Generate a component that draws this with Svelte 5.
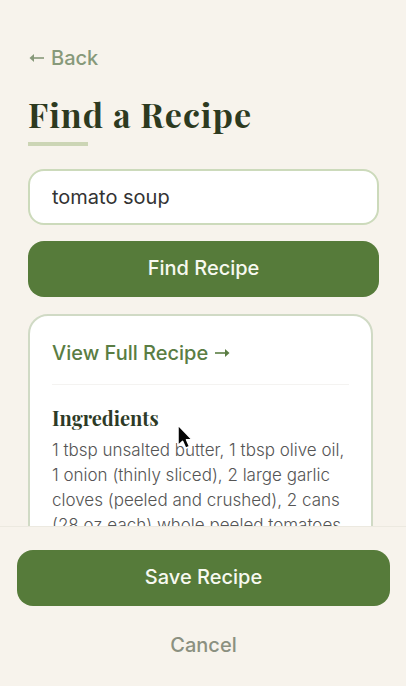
<script>
  let query = $state("tomato soup");

  const recipe = {
    url: "#recipe",
    ingredients: [
      "1 tbsp unsalted butter",
      "1 tbsp olive oil",
      "1 onion (thinly sliced)",
      "2 large garlic cloves (peeled and crushed)",
      "2 cans (28 oz each) whole peeled tomatoes"
    ]
  };
</script>

<div class="screen">
  <main>
    <button class="back" type="button">
      <svg width="17" height="10" viewBox="0 0 17 10" aria-hidden="true">
        <path d="M5 5H16" stroke="currentColor" stroke-width="1.6" />
        <path d="M1.5 5L6 1V9Z" fill="currentColor" />
      </svg>
      Back
    </button>

    <h1>Find a Recipe</h1>

    <form onsubmit={(e) => e.preventDefault()}>
      <input type="text" aria-label="Recipe name" bind:value={query} />
      <button class="primary" type="submit">Find Recipe</button>
    </form>

    <div class="results">
      <article class="card">
        <div class="card-head">
          <a href={recipe.url}>
            View Full Recipe
            <svg width="17" height="10" viewBox="0 0 17 10" aria-hidden="true">
              <path d="M1 5H12" stroke="currentColor" stroke-width="1.6" />
              <path d="M15.5 5L11 1V9Z" fill="currentColor" />
            </svg>
          </a>
        </div>
        <h2>Ingredients</h2>
        <p>{recipe.ingredients.join(", ")}</p>
      </article>
    </div>
  </main>

  <footer>
    <button class="primary" type="button">Save Recipe</button>
    <button class="cancel" type="button">Cancel</button>
  </footer>

  <svg class="pointer" width="18" height="28" viewBox="0 0 18 28" aria-hidden="true">
    <path
      d="M2 2V22.5L6.6 18.4L9.7 25.2L13.5 23.5L10.5 16.8H16.2Z"
      fill="#050505"
      stroke="#fff"
      stroke-width="1.5"
      stroke-linejoin="round"
    />
  </svg>
</div>

<style>
  :global(body) {
    margin: 0;
    background: #f7f3ec;
  }

  .screen {
    position: relative;
    display: flex;
    flex-direction: column;
    height: 100vh;
    box-sizing: border-box;
    color: #333;
    font-family: Inter, sans-serif;
  }

  main {
    flex: 1;
    min-height: 0;
    padding: 46px 27px 0 28px;
    overflow-y: auto;
    scrollbar-width: none;
  }

  button {
    font: inherit;
    border: 0;
    cursor: pointer;
  }

  .back,
  .card-head a {
    display: flex;
    align-items: center;
    gap: 6px;
    font-size: 20px;
    font-weight: 500;
    line-height: 24px;
  }

  .back {
    padding: 0;
    background: none;
    color: #87997a;
  }

  h1 {
    margin: 22px 0 23px;
    color: #2d3a1f;
    font-family: "Playfair Display", "Liberation Serif", serif;
    font-size: 34px;
    font-weight: 700;
    letter-spacing: 1px;
    line-height: 44px;
  }

  h1::after {
    content: "";
    display: block;
    width: 60px;
    height: 4px;
    margin-top: 6px;
    background: #ccd5b5;
  }

  form {
    display: flex;
    flex-direction: column;
    gap: 16px;
  }

  input {
    width: 100%;
    height: 56px;
    box-sizing: border-box;
    padding: 0 22px;
    border: 2px solid #ccdabb;
    border-radius: 16px;
    outline: none;
    background: #fff;
    color: #333;
    font: inherit;
    font-size: 20px;
  }

  .primary {
    width: 100%;
    height: 56px;
    padding: 0 16px 2px;
    border-radius: 16px;
    background: #567b3a;
    color: #f7f9f0;
    font-size: 20px;
    font-weight: 500;
  }

  .results {
    margin-top: 17px;
    padding-right: 6px;
  }

  .card {
    padding: 25px 22px;
    border: 2px solid #d0dac5;
    border-radius: 20px;
    background: #fff;
  }

  .card-head {
    padding-bottom: 19px;
    border-bottom: 1px solid #f4f3f1;
  }

  .card-head a {
    color: #5a7d43;
    text-decoration: none;
  }

  h2 {
    margin: 20px 0 7px;
    color: #2d3a26;
    font-family: "Playfair Display", "Liberation Serif", serif;
    font-size: 20px;
    font-weight: 700;
    line-height: 26px;
  }

  p {
    margin: 0;
    color: #555;
    font-size: 17px;
    font-weight: 300;
    line-height: 25px;
  }

  footer {
    display: flex;
    flex-direction: column;
    align-items: center;
    gap: 17px;
    padding: 23px 16px 19px 17px;
    border-top: 1px solid #ece9e0;
    background: #f7f3ec;
  }

  .cancel {
    padding: 10px 24px;
    background: none;
    color: #8b9080;
    font-size: 20px;
    font-weight: 500;
    line-height: 24px;
  }

  .pointer {
    position: absolute;
    top: 423px;
    left: 176px;
    pointer-events: none;
  }
</style>
